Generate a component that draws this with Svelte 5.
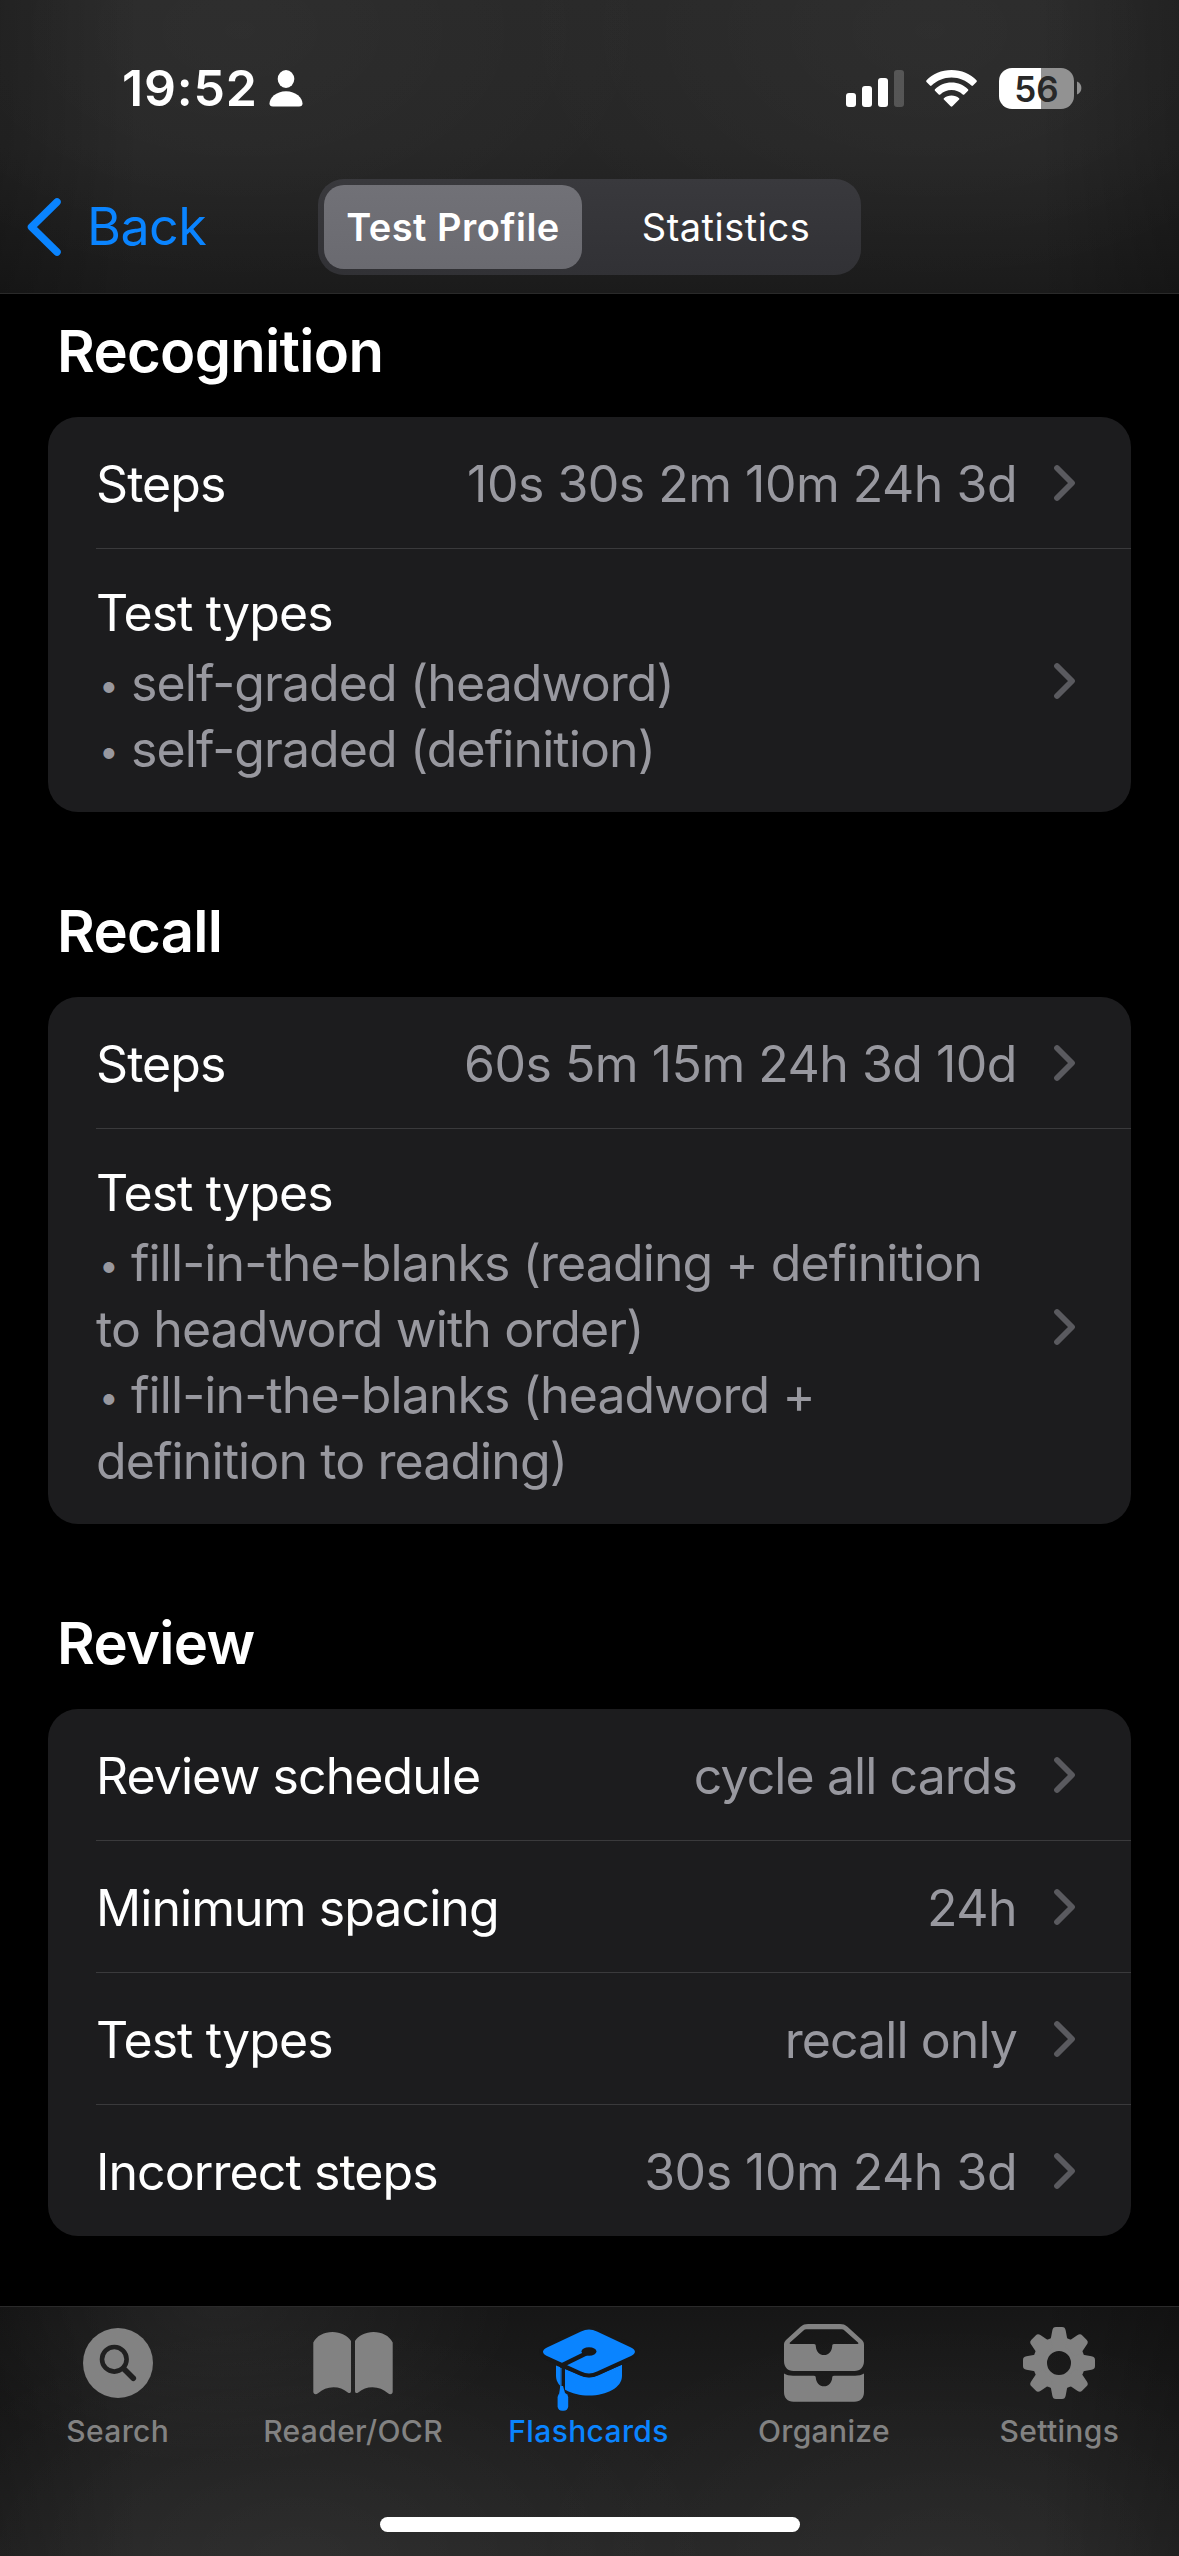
<script lang="ts">
  type Row = { label: string; value?: string; details?: string[] };
  type Section = { title: string; rows: Row[] };

  const sections: Section[] = [
    {
      title: 'Recognition',
      rows: [
        { label: 'Steps', value: '10s 30s 2m 10m 24h 3d' },
        {
          label: 'Test types',
          details: ['• self-graded (headword)', '• self-graded (definition)']
        }
      ]
    },
    {
      title: 'Recall',
      rows: [
        { label: 'Steps', value: '60s 5m 15m 24h 3d 10d' },
        {
          label: 'Test types',
          details: [
            '• fill-in-the-blanks (reading + definition',
            'to headword with order)',
            '• fill-in-the-blanks (headword +',
            'definition to reading)'
          ]
        }
      ]
    },
    {
      title: 'Review',
      rows: [
        { label: 'Review schedule', value: 'cycle all cards' },
        { label: 'Minimum spacing', value: '24h' },
        { label: 'Test types', value: 'recall only' },
        { label: 'Incorrect steps', value: '30s 10m 24h 3d' }
      ]
    }
  ];

  const segments = ['Test Profile', 'Statistics'];
  const tabs = ['Search', 'Reader/OCR', 'Flashcards', 'Organize', 'Settings'];

  let segment = $state('Test Profile');
  let tab = $state('Flashcards');
</script>

<div class="screen">
  <header>
    <div class="status">
      <div class="clock">
        <span class="time">19:52</span>
        <svg width="34" height="37" viewBox="0 0 34 37" fill="currentColor">
          <ellipse cx="17" cy="9" rx="8.3" ry="9" />
          <path d="M4 36.500C1.500 36.500 0.500 35.500 0.500 33.500C0.500 28 7 21.200 17 21.200S33.500 28 33.500 33.500C33.500 35.500 32.500 36.500 30 36.500Z" />
        </svg>
      </div>
      <div class="indicators">
        <svg class="signal" width="58" height="37" viewBox="0 0 58 37" fill="currentColor">
          <rect x="0" y="23" width="10" height="14" rx="3" />
          <rect x="16" y="16" width="10" height="21" rx="3" />
          <rect x="32" y="8" width="10" height="29" rx="3" />
          <rect x="48" y="0" width="10" height="37" rx="3" opacity="0.2" />
        </svg>
        <svg class="wifi" width="51" height="37" viewBox="0 0 51 37" fill="currentColor">
          <path d="M25.500 0C35.500 0 44.500 4 50.500 10.300C51 10.900 51 11.500 50.500 12L47 15.500C46.500 16 45.900 16 45.400 15.500C40.200 10.500 33.200 7.500 25.500 7.500S10.800 10.500 5.600 15.500C5.100 16 4.500 16 4 15.500L0.500 12C0 11.500 0 10.900 0.500 10.300C6.500 4 15.500 0 25.500 0Z" />
          <path d="M25.500 12.500C32 12.500 37.800 15 42 19.200C42.500 19.700 42.500 20.300 42 20.800L38.300 24.400C37.800 24.900 37.200 24.900 36.700 24.400C33.700 21.700 29.800 20 25.500 20S17.300 21.700 14.300 24.400C13.800 24.900 13.200 24.900 12.700 24.400L9 20.800C8.500 20.300 8.500 19.700 9 19.200C13.200 15 19 12.500 25.500 12.500Z" />
          <path d="M25.500 25.500C28.400 25.500 31.100 26.500 33.100 28.200C33.600 28.700 33.600 29.100 33.100 29.600L26.400 36.300C25.800 36.900 25.200 36.900 24.600 36.300L17.900 29.600C17.400 29.100 17.400 28.700 17.900 28.200C19.900 26.500 22.600 25.500 25.500 25.500Z" />
        </svg>
        <div class="battery"><span>56</span></div>
        <svg class="nub" width="5" height="14" viewBox="0 0 5 14" fill="#909090">
          <path d="M0 0.500C2.600 1.500 4.400 4 4.400 7S2.600 12.500 0 13.500Z" />
        </svg>
      </div>
    </div>

    <nav class="navbar">
      <button class="back">
        <svg width="36" height="60" viewBox="0 0 36 60" fill="none">
          <path d="M31 5L5.500 30L31 55" stroke="currentColor" stroke-width="7.500" stroke-linecap="round" stroke-linejoin="round" />
        </svg>
        <span>Back</span>
      </button>
      <div class="segmented">
        {#each segments as name}
          <button class:selected={segment === name} onclick={() => (segment = name)}>{name}</button>
        {/each}
      </div>
    </nav>
  </header>

  <main>
    {#each sections as section}
      <section>
        <h2>{section.title}</h2>
        <div class="card">
          {#each section.rows as row}
            <div class="row" class:tall={row.details}>
              <div class="text">
                <span class="label">{row.label}</span>
                {#if row.details}
                  <div class="details">
                    {#each row.details as line}
                      <p>
                        {#if line.startsWith('•')}<span class="bullet">•</span>{line.slice(2)}{:else}{line}{/if}
                      </p>
                    {/each}
                  </div>
                {/if}
              </div>
              {#if row.value}
                <span class="value" class:numeric={/\d/.test(row.value)}>{row.value}</span>
              {/if}
              <svg class="chevron" width="24" height="38" viewBox="0 0 24 38" fill="none">
                <path d="M4 4L19 19L4 34" stroke="currentColor" stroke-width="5.800" stroke-linecap="round" stroke-linejoin="round" />
              </svg>
            </div>
          {/each}
        </div>
      </section>
    {/each}
  </main>

  <footer>
    <nav class="tabs">
      {#each tabs as name}
        <button class:active={tab === name} onclick={() => (tab = name)}>
          <svg width="96" height="86" viewBox="0 0 96 86" fill="currentColor">
            {#if name === 'Search'}
              <circle cx="48" cy="39" r="35" />
              <g fill="none" stroke="#202020" stroke-linecap="round">
                <circle cx="44.300" cy="35.300" r="12.300" stroke-width="4.600" />
                <path d="M53.500 44.500L63.300 54.300" stroke-width="5.600" />
              </g>
            {:else if name === 'Reader/OCR'}
              <path d="M8.300 18.500C12 11.500 19 8 27.500 8C35.500 8 42.500 11.500 46 17V67C46 69 44.500 69.700 42.800 68.500C38.500 65 34 63.300 28.500 63.300C22.500 63.300 17.500 65.500 13 69.300C11 70.800 8.300 70.500 8.300 67.500Z" />
              <path d="M87.700 18.500C84 11.500 77 8 68.500 8C60.500 8 53.500 11.500 50 17V67C50 69 51.500 69.700 53.200 68.500C57.500 65 62 63.300 67.500 63.300C73.500 63.300 78.500 65.500 83 69.300C85 70.800 87.700 70.500 87.700 67.500Z" />
            {:else if name === 'Flashcards'}
              <path d="M15 41.500L40 51.500C45.500 54 50.500 54 56 51.500L81 40.800V52C81 63.500 66 71.500 48 71.500C30 71.500 15 63.500 15 52Z" />
              <path d="M40 7.500C45.500 4.800 50.500 4.800 56 7.500L90 23.500C95.300 26 95.300 29.500 90 32L56 47.500C50.500 50 45.500 50 40 47.500L6 32C0.700 29.500 0.700 26 6 23.500Z" stroke="#181818" stroke-width="8" paint-order="stroke" />
              <path d="M47 28.500L21.500 41" fill="none" stroke="#181818" stroke-width="4.200" />
              <ellipse cx="48" cy="27.500" rx="7.500" ry="4.200" fill="#181818" />
              <path d="M19.300 40L24 42V68H19.300Z" fill="#181818" />
              <path d="M19.900 44V70" stroke="currentColor" stroke-width="1.200" />
              <path d="M18 70.500L19.300 62H22L24.500 70.500Z" />
              <rect x="16.600" y="69" width="10.600" height="17.800" rx="4.500" />
            {:else if name === 'Organize'}
              <path fill-rule="evenodd" d="M8 21C8 19 8.500 17.500 10 16L24.500 2.800C27 0.700 29 0 32 0H64C67 0 69 0.700 71.500 2.800L86 16C87.500 17.500 88 19 88 21V37C88 43 84.500 47 78.500 47H17.500C11.500 47 8 43 8 37ZM14.500 20H38C39.300 20 39.800 20.800 39.800 22.200C40.300 28 43.500 31 48 31S55.700 28 56.200 22.200C56.200 20.800 56.700 20 58 20H81.500C82.500 20 82.700 19.200 82 18.500L68.500 6.500C67.300 5.500 66.500 5.300 65 5.300H31C29.500 5.300 28.700 5.500 27.500 6.500L14 18.500C13.300 19.200 13.500 20 14.500 20Z" />
              <path d="M8 49.500C10.500 51 13.500 51.700 17 51.700H38C39.300 51.700 39.800 52.500 39.800 53.700C40.300 59 43.500 62.300 48 62.300S55.700 59 56.200 53.700C56.200 52.500 56.700 51.700 58 51.700H79C82.500 51.700 85.500 51 88 49.500V68C88 74 84.500 77.700 78.500 77.700H17.500C11.500 77.700 8 74 8 68Z" />
            {:else}
              <circle cx="48" cy="39" r="19" fill="none" stroke="currentColor" stroke-width="14" />
              {#each [0, 45, 90, 135, 180, 225, 270, 315] as angle}
                <path transform="rotate({angle} 48 39)" d="M37.500 16.500C39 16 39.700 15 40 13.500L41.300 6.500C41.800 4 42.700 3 45 3H51C53.300 3 54.200 4 54.700 6.500L56 13.500C56.300 15 57 16 58.500 16.500L55 23H41Z" />
              {/each}
            {/if}
          </svg>
          <span>{name}</span>
        </button>
      {/each}
    </nav>
    <div class="home"></div>
  </footer>
</div>

<style>
  :global(body) {
    margin: 0;
    background: #000;
  }

  .screen {
    display: flex;
    flex-direction: column;
    width: 1179px;
    height: 2556px;
    overflow: hidden;
    background: #000;
    color: #fff;
    font-family: Inter, 'Liberation Sans', sans-serif;
  }

  button {
    padding: 0;
    border: none;
    background: none;
    color: inherit;
    font: inherit;
  }

  svg {
    display: block;
    flex-shrink: 0;
  }

  header {
    flex-shrink: 0;
    box-sizing: border-box;
    height: 294px;
    border-bottom: 1px solid #2a2a2a;
    background:
      radial-gradient(ellipse 420px 260px at 240px 30px, rgba(255, 255, 255, 0.03), transparent),
      radial-gradient(ellipse 420px 260px at 930px 30px, rgba(255, 255, 255, 0.03), transparent),
      linear-gradient(90deg, rgba(0, 0, 0, 0.22), transparent 12%, transparent 88%, rgba(0, 0, 0, 0.22)),
      linear-gradient(#282828 0, #262626 50%, #1b1b1b);
  }

  .status {
    display: flex;
    justify-content: space-between;
    box-sizing: border-box;
    height: 179px;
    padding: 58px 97px 0 122px;
  }

  .clock,
  .indicators {
    display: flex;
    align-items: center;
    height: 60px;
  }

  .clock {
    gap: 11px;
  }

  .time {
    font-size: 50px;
    font-weight: 600;
    letter-spacing: 0.8px;
  }

  .wifi {
    margin-left: 22px;
  }

  .battery {
    width: 75px;
    height: 41px;
    margin-left: 22px;
    border-radius: 13px;
    background: linear-gradient(90deg, #fff 56%, #929292 56%);
    color: #282828;
    font-size: 35px;
    font-weight: 600;
    line-height: 42px;
    text-align: center;
  }

  .nub {
    margin-left: 3px;
  }

  .navbar {
    display: flex;
    align-items: center;
    height: 96px;
  }

  .back {
    display: flex;
    align-items: center;
    gap: 25px;
    width: 292px;
    margin-left: 26px;
    color: #0a84ff;
    font-size: 52px;
    letter-spacing: -0.6px;
  }

  .back span {
    padding-bottom: 2px;
  }

  .segmented {
    display: flex;
    gap: 15px;
    box-sizing: border-box;
    width: 543px;
    height: 96px;
    padding: 6px;
    border-radius: 26px;
    background: linear-gradient(#39393d, #313135);
  }

  .segmented button {
    flex: 1 1 0;
    border-radius: 20px;
    font-size: 38px;
    letter-spacing: 0.5px;
  }

  .segmented .selected {
    background: linear-gradient(#717177, #6a6a70);
    font-weight: 600;
  }

  main {
    flex: 1;
    padding: 22px 48px 0;
  }

  section {
    margin-bottom: 84px;
  }

  section:last-child {
    margin-bottom: 0;
  }

  h2 {
    margin: 0 0 31px 9px;
    font-size: 58px;
    font-weight: 600;
    line-height: 70px;
    letter-spacing: -0.7px;
  }

  .card {
    border-radius: 30px;
    background: #1c1c1e;
    font-size: 50px;
    letter-spacing: -0.93px;
  }

  .row {
    display: flex;
    align-items: center;
    height: 131px;
    margin-left: 48px;
    padding-right: 54px;
    border-bottom: 1px solid #3a3a3c;
  }

  .row:last-child {
    border-bottom: none;
  }

  .tall {
    height: auto;
  }

  .text {
    flex: 1;
    min-width: 0;
    padding-top: 3px;
  }

  .tall .text {
    padding: 34px 0 30px;
  }

  .label {
    display: block;
    line-height: 60px;
  }

  .details {
    margin-top: 7px;
  }

  p {
    margin: 0;
    color: #98989f;
    line-height: 66px;
    letter-spacing: -0.9px;
    white-space: nowrap;
  }

  .bullet {
    display: inline-block;
    box-sizing: border-box;
    width: 35px;
    padding-left: 3px;
    font-size: 35px;
    line-height: 1;
    vertical-align: 3px;
  }

  .value {
    padding-top: 3px;
    color: #98989f;
  }

  .numeric {
    letter-spacing: -0.5px;
  }

  .chevron {
    margin-left: 36px;
    color: #5a5a5f;
  }

  footer {
    flex-shrink: 0;
    box-sizing: border-box;
    height: 250px;
    border-top: 1px solid #2a2a2a;
    background:
      radial-gradient(ellipse 420px 240px at 300px 250px, rgba(255, 255, 255, 0.04), transparent),
      radial-gradient(ellipse 420px 240px at 940px 250px, rgba(255, 255, 255, 0.03), transparent),
      radial-gradient(ellipse 300px 160px at 220px 0, rgba(255, 255, 255, 0.06), transparent),
      linear-gradient(90deg, rgba(0, 0, 0, 0.22), transparent 12%, transparent 88%, rgba(0, 0, 0, 0.22)),
      linear-gradient(#161616, #262626);
  }

  .tabs {
    display: flex;
    height: 210px;
    padding-right: 2px;
  }

  .tabs button {
    display: flex;
    flex-direction: column;
    align-items: center;
    gap: 3px;
    flex: 1 1 0;
    padding-top: 17px;
    color: #828282;
    font-size: 30px;
    font-weight: 500;
    line-height: 36px;
    letter-spacing: 0.35px;
  }

  .tabs .active {
    color: #0a84ff;
  }

  .tabs svg {
    overflow: visible;
  }

  .home {
    width: 420px;
    height: 15px;
    margin: 0 auto;
    border-radius: 8px;
    background: #fff;
  }
</style>
